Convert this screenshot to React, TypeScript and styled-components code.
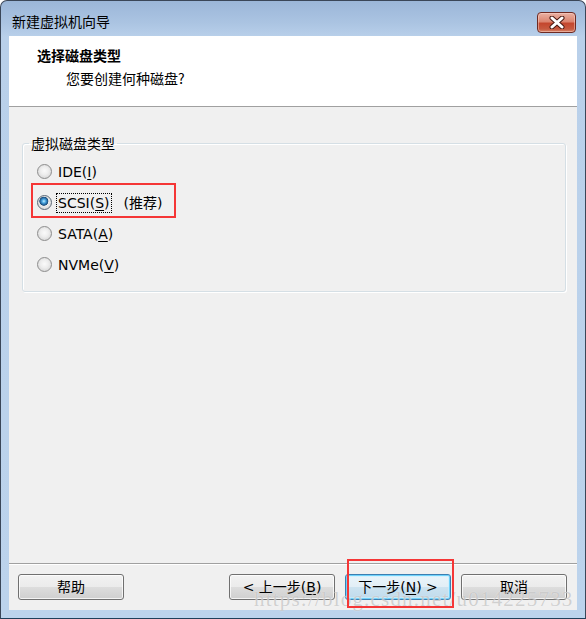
import React from "react";
import styled, { createGlobalStyle, css } from "styled-components";

const UI_FONT = `"DejaVu Sans", "Noto Sans CJK SC", sans-serif`;

const GlobalStyle = createGlobalStyle`
  html, body { margin: 0; padding: 0; background: #ffffff; }
  body { font-family: "Noto Sans CJK SC", "Liberation Sans", sans-serif; }
  #root { width: 586px; height: 619px; }
`;

const Window = styled.div`
  width: 586px;
  height: 619px;
  box-sizing: border-box;
  border: 1px solid #3a4658;
  border-bottom-color: #1f3f5a;
  border-radius: 7px 7px 0 0;
  background: linear-gradient(to bottom, #9bb6d8 0px, #abc4e2 22px, #b9d0ea 36px, #bcd3ec 100%);
  display: flex;
  flex-direction: column;
  overflow: hidden;
`;

const TitleBar = styled.div`
  height: 35px;
  flex-shrink: 0;
  box-sizing: border-box;
  padding: 10px 9px 0 11px;
  display: flex;
  align-items: flex-start;
  justify-content: space-between;
`;

const TitleText = styled.div`
  font-size: 14px;
  line-height: 20px;
  color: #000;
`;

const CloseButton = styled.button`
  margin-top: 1px;
  width: 39px;
  height: 21px;
  padding: 0;
  box-sizing: border-box;
  border: 1px solid #6e2a22;
  border-radius: 4px;
  background: linear-gradient(to bottom, #eab1a3 0%, #dc8570 45%, #c4472e 55%, #c75a40 85%, #d98a6e 100%);
  box-shadow: inset 0 0 0 1px rgba(255, 220, 210, 0.45);
  display: flex;
  align-items: center;
  justify-content: center;
`;

const Client = styled.div`
  flex: 1;
  margin: 0 8px 8px 8px;
  background: #f0f0f0;
  display: flex;
  flex-direction: column;
  min-height: 0;
`;

const Header = styled.div`
  height: 71px;
  flex-shrink: 0;
  box-sizing: border-box;
  background: #ffffff;
  border-bottom: 1px solid #a0a0a0;
  padding: 9px 0 0 28px;
`;

const HeaderTitle = styled.div`
  font-size: 14px;
  line-height: 20px;
  font-weight: bold;
  color: #000;
`;

const HeaderSubtitle = styled.div`
  margin-top: 3px;
  padding-left: 29px;
  font-size: 14px;
  line-height: 20px;
  color: #000;
`;

const Body = styled.div`
  flex: 1;
  padding: 26px 11px 0 13px;
`;

const GroupBox = styled.fieldset`
  margin: 0;
  padding: 0 0 11px 0;
  min-width: 0;
  border: 1px solid #d5dfe5;
  border-radius: 3px;
  box-shadow: inset 1px 1px 0 #ffffff, 1px 1px 0 #ffffff;
`;

const Legend = styled.legend`
  margin-left: 6px;
  padding: 0 2px;
  font-size: 14px;
  line-height: 20px;
  color: #000;
`;

const Options = styled.div`
  margin-top: 3px;
  padding-left: 14px;
  display: flex;
  flex-direction: column;
`;

const OptionRow = styled.label`
  position: relative;
  height: 31px;
  display: flex;
  align-items: center;
  gap: 5px;
  font-family: ${UI_FONT};
  font-size: 14px;
  color: #000;
`;

const Radio = styled.span<{ $checked?: boolean }>`
  width: 15px;
  height: 15px;
  flex-shrink: 0;
  box-sizing: border-box;
  border-radius: 50%;
  border: 1px solid #8d8d8d;
  background: radial-gradient(circle at 50% 45%, #fafafa 0%, #eeeeee 40%, #cdcdcd 100%);
  ${(p) =>
    p.$checked &&
    css`
      background:
        radial-gradient(circle at 45% 40%, #c8eeff 0px, #5cb6ea 1.5px, #2d79b5 3px, #1b4c78 4.2px, rgba(27, 76, 120, 0) 4.8px),
        radial-gradient(circle at 50% 45%, #fafafa 0%, #eeeeee 40%, #cdcdcd 100%);
      border-color: #5c6a78;
    `}
`;

const OptionText = styled.span<{ $focused?: boolean }>`
  line-height: 18px;
  border: 1px dotted transparent;
  padding: 0 1px;
  margin-left: -1px;
  ${(p) =>
    p.$focused &&
    css`
      border-color: #000;
    `}
`;

const Hint = styled.span`
  margin-left: 7px;
  line-height: 18px;
`;

const Mnemonic = styled.span`
  text-decoration: underline;
  text-underline-offset: 2px;
`;

const Annotation = styled.div<{ $left: number; $top: number; $w: number; $h: number }>`
  position: absolute;
  left: ${(p) => p.$left}px;
  top: ${(p) => p.$top}px;
  width: ${(p) => p.$w}px;
  height: ${(p) => p.$h}px;
  box-sizing: border-box;
  border: 2px solid #f53636;
  pointer-events: none;
  z-index: 2;
`;

const Footer = styled.div`
  position: relative;
  flex-shrink: 0;
  border-top: 1px solid #a0a0a0;
  box-shadow: inset 0 1px 0 #ffffff;
  padding: 10px 10px 10px 9px;
  display: flex;
  align-items: center;
`;

const Spacer = styled.div`
  flex: 1;
`;

const ButtonGroup = styled.div`
  display: flex;
  gap: 10px;
`;

const Button = styled.button<{ $default?: boolean }>`
  width: 106px;
  height: 26px;
  padding: 0;
  box-sizing: border-box;
  border: 1px solid #707070;
  border-radius: 3px;
  background: linear-gradient(to bottom, #f2f2f2 0%, #ebebeb 50%, #dddddd 50%, #cfcfcf 100%);
  box-shadow: inset 0 0 0 1px rgba(255, 255, 255, 0.75);
  font-family: ${UI_FONT};
  font-size: 14px;
  line-height: 20px;
  color: #000;
  ${(p) =>
    p.$default &&
    css`
      border-color: #3c7fb1;
      background: linear-gradient(to bottom, #eaf4fa 0%, #e2eef6 50%, #cde3f0 50%, #c0dbec 100%);
      box-shadow: inset 0 0 0 1px #6fd2fb, inset 0 0 0 2px rgba(200, 240, 255, 0.6);
    `}
`;

const Watermark = styled.div`
  position: absolute;
  left: 245px;
  top: 23px;
  font-family: "Liberation Serif", serif;
  font-size: 21px;
  line-height: 24px;
  letter-spacing: 1.2px;
  color: rgba(165, 165, 165, 0.5);
  text-shadow: 0 0 1px rgba(255, 255, 255, 0.8);
  white-space: nowrap;
  pointer-events: none;
  z-index: 1;
`;

const CloseIcon = () => (
  <svg width="16" height="13" viewBox="0 0 16 13">
    <path d="M3 2 L13 11 M13 2 L3 11" stroke="#4a1a12" strokeWidth="5" strokeLinecap="round" />
    <path d="M3 2 L13 11 M13 2 L3 11" stroke="#ffffff" strokeWidth="3" strokeLinecap="round" />
  </svg>
);

type Option = { label: string; key: string; checked?: boolean; hint?: string };

const options: Option[] = [
  { label: "IDE", key: "I" },
  { label: "SCSI", key: "S", checked: true, hint: "(推荐)" },
  { label: "SATA", key: "A" },
  { label: "NVMe", key: "V" },
];

export default function App() {
  return (
    <>
      <GlobalStyle />
      <Window>
        <TitleBar>
          <TitleText>新建虚拟机向导</TitleText>
          <CloseButton aria-label="关闭">
            <CloseIcon />
          </CloseButton>
        </TitleBar>
        <Client>
          <Header>
            <HeaderTitle>选择磁盘类型</HeaderTitle>
            <HeaderSubtitle>您要创建何种磁盘?</HeaderSubtitle>
          </Header>
          <Body>
            <GroupBox>
              <Legend>虚拟磁盘类型</Legend>
              <Options>
                {options.map((o) => (
                  <OptionRow key={o.label}>
                    <Radio $checked={o.checked} />
                    <OptionText $focused={o.checked}>
                      {o.label}(<Mnemonic>{o.key}</Mnemonic>)
                    </OptionText>
                    {o.hint && <Hint>{o.hint}</Hint>}
                    {o.checked && <Annotation $left={-6} $top={-4} $w={145} $h={35} />}
                  </OptionRow>
                ))}
              </Options>
            </GroupBox>
          </Body>
          <Footer>
            <Button>帮助</Button>
            <Spacer />
            <ButtonGroup>
              <Button>
                &lt; 上一步(<Mnemonic>B</Mnemonic>)
              </Button>
              <Button $default>
                下一步(<Mnemonic>N</Mnemonic>) &gt;
              </Button>
              <Button>取消</Button>
            </ButtonGroup>
            <Annotation $left={338} $top={-5} $w={107} $h={49} />
            <Watermark>https://blog.csdn.net/u014225733</Watermark>
          </Footer>
        </Client>
      </Window>
    </>
  );
}
